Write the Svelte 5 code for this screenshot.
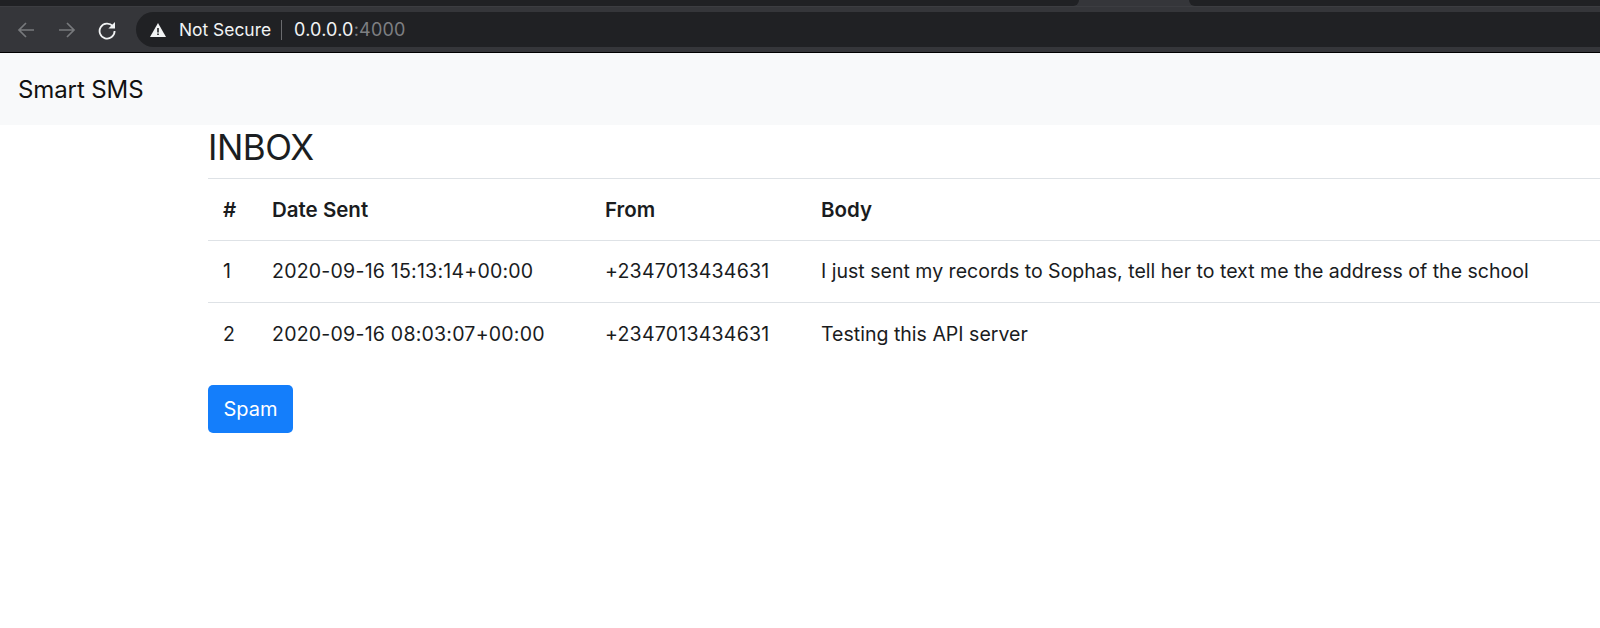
<script>
	const messages = [
		{ id: 1, date: '2020-09-16 15:13:14+00:00', from: '+2347013434631', body: 'I just sent my records to Sophas, tell her to text me the address of the school' },
		{ id: 2, date: '2020-09-16 08:03:07+00:00', from: '+2347013434631', body: 'Testing this API server' }
	];
</script>

<div class="chrome">
	<div class="tabstrip">
		<div class="tab-left"></div>
		<div class="tab-right"></div>
	</div>
	<div class="toolbar">
		<svg class="nav first" viewBox="0 0 20 20" width="20" height="20">
			<path d="M18 10H3M10 3l-7 7 7 7" fill="none" stroke="#77797c" stroke-width="1.7" />
		</svg>
		<svg class="nav" viewBox="0 0 20 20" width="20" height="20">
			<path d="M2 10h15M10 3l7 7-7 7" fill="none" stroke="#77797c" stroke-width="1.7" />
		</svg>
		<svg class="nav reload" viewBox="0 0 20 20" width="20" height="20">
			<path d="M15.8 6.2A7.5 7.5 0 1 0 17.6 11" fill="none" stroke="#f1f3f4" stroke-width="1.8" />
			<path d="M18 2v6.6h-6.6z" fill="#f1f3f4" />
		</svg>
		<div class="omnibox">
			<svg class="warn" viewBox="0 0 16 14" width="16" height="14">
				<path d="M8 0l8 14H0z" fill="#f1f3f4" />
				<path d="M7.2 5h1.6v4.6H7.2zM7.2 10.4h1.6V12H7.2z" fill="#202124" />
			</svg>
			<span class="secure">Not Secure</span>
			<span class="divider"></span>
			<span class="url">0.0.0.0<span class="port">:4000</span></span>
		</div>
	</div>
</div>

<nav class="navbar">
	<span class="brand">Smart SMS</span>
</nav>

<main class="content">
	<h2>INBOX</h2>
	<table>
		<colgroup>
			<col class="c-id" />
			<col class="c-date" />
			<col class="c-from" />
			<col />
		</colgroup>
		<thead>
			<tr>
				<th>#</th>
				<th>Date Sent</th>
				<th>From</th>
				<th>Body</th>
			</tr>
		</thead>
		<tbody>
			{#each messages as m}
				<tr>
					<td>{m.id}</td>
					<td class="num">{m.date}</td>
					<td class="num">{m.from}</td>
					<td>{m.body}</td>
				</tr>
			{/each}
		</tbody>
	</table>
	<button>Spam</button>
</main>

<style>
	:global(body) {
		font-family: Inter, 'Liberation Sans', sans-serif;
		background: #fff;
		color: #212529;
		overflow: hidden;
	}

	.chrome {
		background: #35363a;
		border-bottom: 1px solid #000;
	}

	.tabstrip {
		height: 6px;
		display: flex;
		justify-content: space-between;
	}

	.tab-left {
		width: 1079px;
		background: #202124;
		border-bottom-right-radius: 8px;
	}

	.tab-right {
		width: 411px;
		background: #202124;
		border-bottom-left-radius: 8px;
	}

	.toolbar {
		height: 46px;
		display: flex;
		align-items: center;
		border-top: 1px solid #3c3d41;
		box-sizing: border-box;
	}

	.nav {
		margin-right: 21px;
	}

	.nav.first {
		margin-left: 16px;
	}

	.reload {
		margin-left: -1px;
		margin-right: 19px;
	}

	.omnibox {
		flex: 1;
		height: 35px;
		background: #202124;
		border-radius: 18px 0 0 18px;
		display: flex;
		align-items: center;
		padding-left: 14px;
		font-size: 17.4px;
		color: #f1f3f4;
	}

	.warn {
		margin-right: 13px;
	}

	.divider {
		width: 1px;
		height: 20px;
		background: #6a6b6e;
		margin: 0 12px 0 10px;
	}

	.url {
		font-size: 18px;
		letter-spacing: 0.2px;
	}

	.port {
		color: #7d7f82;
	}

	.navbar {
		background: #f8f9fa;
		height: 72px;
		display: flex;
		align-items: center;
		padding-left: 18px;
	}

	.brand {
		font-size: 24px;
		color: #111;
		letter-spacing: -0.1px;
	}

	.content {
		padding-left: 208px;
	}

	h2 {
		margin: 0;
		font-size: 35px;
		font-weight: 400;
		line-height: 40px;
		padding-top: 2px;
		height: 52.5px;
		box-sizing: border-box;
		letter-spacing: -0.5px;
		color: #1b1e21;
	}

	table {
		width: 100%;
		border-collapse: collapse;
		table-layout: fixed;
		font-size: 19.55px;
		color: #1a1c1e;
		margin-bottom: 20px;
	}

	.c-id {
		width: 49px;
	}

	.c-date {
		width: 333px;
	}

	.c-from {
		width: 216px;
	}

	th,
	td {
		text-align: left;
		height: 62.5px;
		padding: 0 15px;
		border-top: 1.5px solid #dee2e6;
		box-sizing: border-box;
		white-space: nowrap;
	}

	th {
		font-weight: 600;
		font-size: 20.5px;
		height: 62px;
	}

	.num {
		letter-spacing: 0.22px;
	}

	button {
		display: block;
		width: 85px;
		height: 48px;
		background: #147efb;
		color: #fff;
		border: 0;
		border-radius: 5px;
		font-family: inherit;
		font-size: 20px;
		padding: 0;
	}
</style>
